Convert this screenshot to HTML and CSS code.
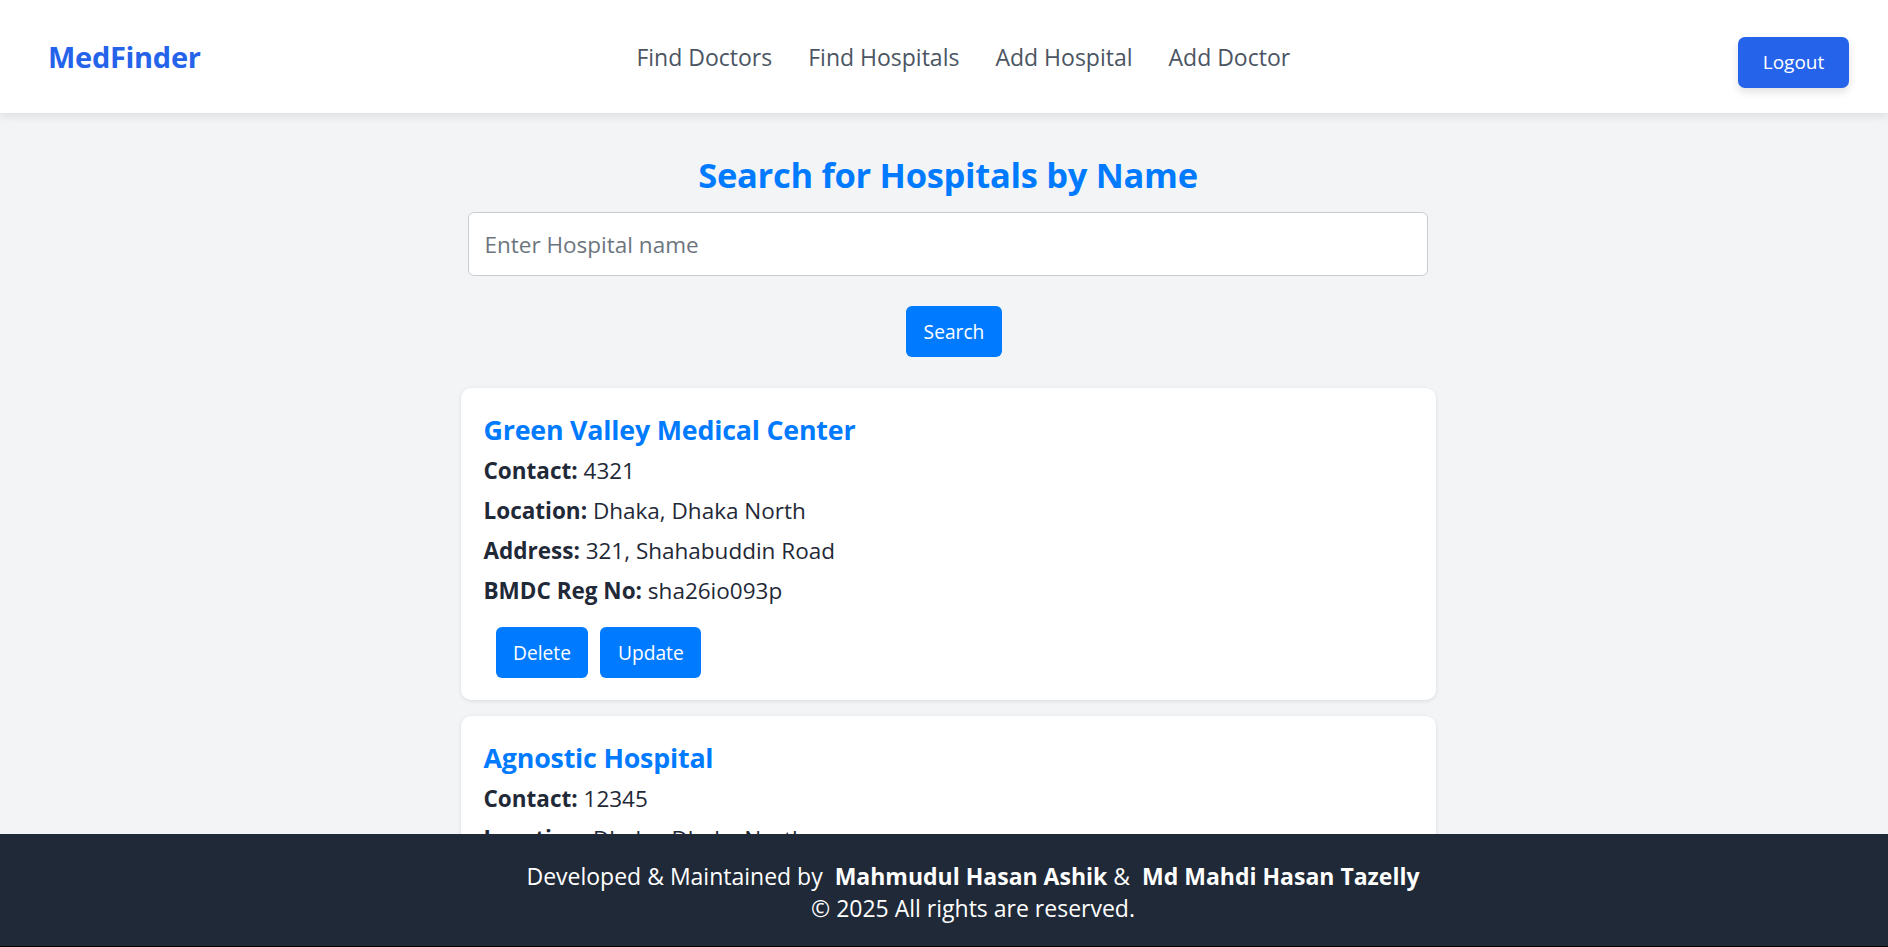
FILE: index.html
```html
<!DOCTYPE html>
<html lang="en">
<head>
<meta charset="utf-8">
<title>MedFinder</title>
<link rel="stylesheet" href="styles.css">
</head>
<body>
<nav class="navbar">
  <a class="brand" href="#">MedFinder</a>
  <div class="nav-links">
    <a href="#">Find Doctors</a>
    <a href="#">Find Hospitals</a>
    <a href="#">Add Hospital</a>
    <a href="#">Add Doctor</a>
  </div>
  <button class="logout">Logout</button>
</nav>

<main class="page">
  <div class="container">
    <h2 class="title">Search for Hospitals by Name</h2>
    <input class="search-input" type="text" placeholder="Enter Hospital name">
    <div class="search-row">
      <button class="btn">Search</button>
    </div>

    <div class="card">
      <h3 class="card-title">Green Valley Medical Center</h3>
      <p><b>Contact:</b> 4321</p>
      <p><b>Location:</b> Dhaka, Dhaka North</p>
      <p><b>Address:</b> 321, Shahabuddin Road</p>
      <p><b>BMDC Reg No:</b> sha26io093p</p>
      <div class="actions">
        <button class="btn">Delete</button>
        <button class="btn">Update</button>
      </div>
    </div>

    <div class="card">
      <h3 class="card-title">Agnostic Hospital</h3>
      <p><b>Contact:</b> 12345</p>
      <p><b>Location:</b> Dhaka, Dhaka North</p>
      <p><b>Address:</b> 12, Mirpur Road</p>
      <p><b>BMDC Reg No:</b> agn12345</p>
      <div class="actions">
        <button class="btn">Delete</button>
        <button class="btn">Update</button>
      </div>
    </div>
  </div>
</main>

<footer class="footer">
  <p>Developed &amp; Maintained by &nbsp;<b>Mahmudul Hasan Ashik</b> &amp; &nbsp;<b>Md Mahdi Hasan Tazelly</b></p>
  <p>© 2025 All rights are reserved.</p>
</footer>
</body>
</html>
```

FILE: styles.css
```css
* { box-sizing: border-box; }

html, body {
  margin: 0;
  padding: 0;
}

body {
  background: #f3f4f6;
  font-family: "Open Sans", "Noto Sans", sans-serif;
  color: #1f2937;
  overflow: hidden;
  height: 947px;
}

.navbar {
  height: 113px;
  background: #ffffff;
  box-shadow: 0 4px 8px rgba(0, 0, 0, 0.08);
  display: flex;
  align-items: center;
  justify-content: space-between;
  padding: 0 39px 0 48px;
  position: relative;
  z-index: 2;
}

.brand {
  font-size: 29px;
  font-weight: 700;
  color: #2563eb;
  text-decoration: none;
  letter-spacing: -0.3px;
}

.nav-links {
  display: flex;
  gap: 36px;
  margin-right: 12px;
}

.nav-links a {
  font-size: 23px;
  color: #4b5563;
  text-decoration: none;
}

.logout {
  margin-top: 11px;
  width: 111px;
  height: 51px;
  border: none;
  border-radius: 7px;
  background: #2563eb;
  color: #ffffff;
  font-family: inherit;
  font-size: 19px;
  box-shadow: 0 4px 8px rgba(0, 0, 0, 0.12);
}

.page {
  padding-left: 8px;
}

.container {
  width: 975px;
  margin: 0 auto;
}

.title {
  margin: 39px 0 15px;
  text-align: center;
  font-size: 34.5px;
  line-height: 45px;
  font-weight: 700;
  color: #007bff;
  letter-spacing: -0.3px;
}

.search-input {
  display: block;
  width: 960px;
  height: 64px;
  margin: 0 7px;
  padding: 0 16px;
  border: 1px solid #cccccc;
  border-radius: 6px;
  background: #ffffff;
  font-family: inherit;
  font-size: 22.5px;
  color: #1f2937;
  outline: none;
}

.search-input::placeholder {
  color: #6c757d;
}

.search-row {
  text-align: center;
  margin-top: 30px;
}

.btn {
  height: 51px;
  padding: 0 17.5px;
  margin-left: 12px;
  border: none;
  border-radius: 6px;
  background: #007bff;
  color: #ffffff;
  font-family: inherit;
  font-size: 19.2px;
}

.card {
  margin-top: 31px;
  background: #ffffff;
  border-radius: 10px;
  padding: 22px 23px 22px;
  box-shadow: 0 1px 4px rgba(0, 0, 0, 0.1);
}

.card + .card {
  margin-top: 16px;
}

.card-title {
  margin: 0;
  font-size: 26.8px;
  line-height: 40px;
  font-weight: 700;
  color: #007bff;
  letter-spacing: -0.2px;
}

.card p {
  margin: 0;
  font-size: 22.5px;
  line-height: 40px;
  color: #1f2937;
}

.card-title + p {
  margin-top: 1px;
}

.card p b {
  font-weight: 700;
}

.actions {
  margin-top: 16px;
  display: flex;
}

.actions .btn:first-child {
  margin-left: 12px;
}

.footer {
  position: fixed;
  left: 0;
  right: 0;
  bottom: 0;
  height: 113px;
  background: #1f2937;
  border-bottom: 1px solid #000000;
  color: #ffffff;
  display: flex;
  flex-direction: column;
  justify-content: center;
  align-items: center;
  padding: 4px 0 0 58px;
  z-index: 3;
}

.footer p {
  margin: 0;
  font-size: 23px;
  line-height: 32px;
  white-space: nowrap;
}

.footer b {
  font-weight: 700;
}
```
